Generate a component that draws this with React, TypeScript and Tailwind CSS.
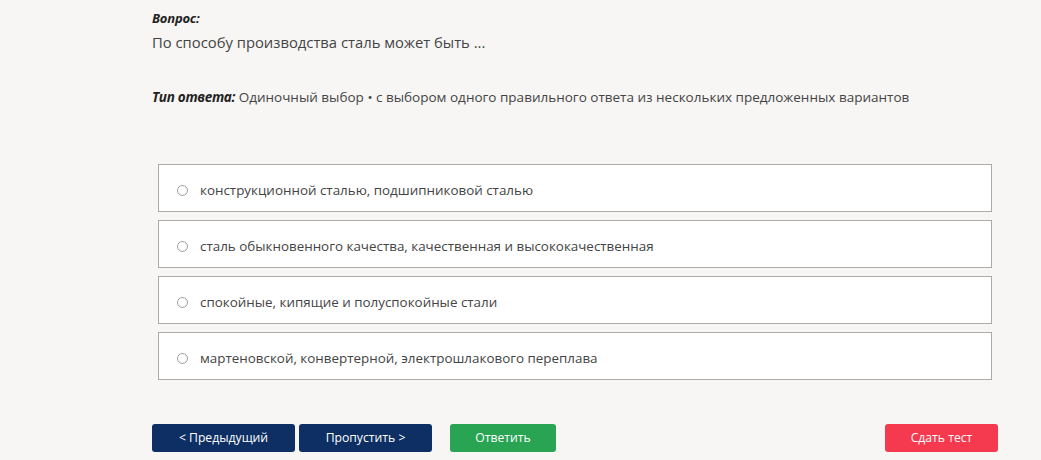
import React from "react";

const options = [
  "конструкционной сталью, подшипниковой сталью",
  "сталь обыкновенного качества, качественная и высококачественная",
  "спокойные, кипящие и полуспокойные стали",
  "мартеновской, конвертерной, электрошлакового переплава",
];

export default function App() {
  return (
    <div
      className="w-[1041px] h-[460px] bg-[#f7f6f4] text-[#333] overflow-hidden"
      style={{ fontFamily: '"Open Sans", "Noto Sans", sans-serif' }}
    >
      <div className="pl-[152px] pt-[10px]">
        <div className="text-[13px] font-bold italic leading-[16px] tracking-[-0.2px] text-[#222]">Вопрос:</div>
        <div className="mt-[6px] text-[14.8px] leading-[20px] text-[#444]">
          По способу производства сталь может быть ...
        </div>
        <div className="mt-[36px] text-[13.5px] leading-[18px] text-[#444]">
          <span className="font-bold italic tracking-[-0.3px] text-[#222]">Тип ответа:</span> Одиночный выбор • с выбором одного правильного ответа из нескольких предложенных вариантов
        </div>
      </div>
      <div className="ml-[158px] mt-[58px] w-[834px] flex flex-col gap-[8px]">
        {options.map((o) => (
          <div
            key={o}
            className="h-[48px] bg-white border border-[#ababab] flex items-center pl-[18px] pt-[5px] text-[13.4px] text-[#444]"
          >
            <span className="w-[11px] h-[11px] rounded-full border border-[#a0a0a0] mr-[12px] shrink-0" />
            {o}
          </div>
        ))}
      </div>
      <div className="flex items-center mt-[44px] pl-[152px] pr-[43px] text-[12.2px] text-white">
        <button className="w-[143px] h-[28px] rounded-[3px] bg-[#0d2f63] pt-[1px]">&lt; Предыдущий</button>
        <button className="ml-[4px] w-[133px] h-[28px] rounded-[3px] bg-[#0d2f63] pt-[1px]">Пропустить &gt;</button>
        <button className="ml-[18px] w-[106px] h-[28px] rounded-[3px] bg-[#28a453] pt-[1px]">Ответить</button>
        <button className="ml-auto w-[113px] h-[28px] rounded-[3px] bg-[#f5394f] pt-[1px]">Сдать тест</button>
      </div>
    </div>
  );
}
